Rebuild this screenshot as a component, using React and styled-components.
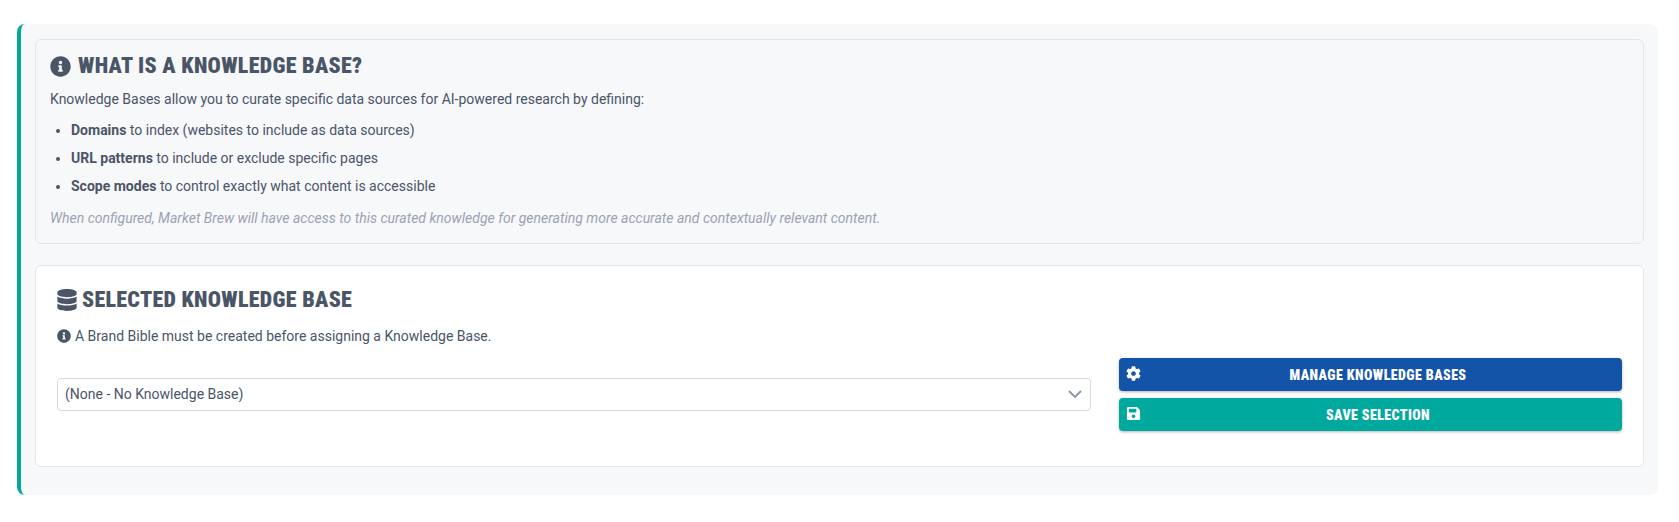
import React from 'react';
import styled, { createGlobalStyle } from 'styled-components';
import { FaCog, FaDatabase, FaInfoCircle, FaSave } from 'react-icons/fa';

const GlobalStyle = createGlobalStyle`
  html, body {
    margin: 0;
    padding: 0;
    background: #fff;
    font-family: Roboto, "Liberation Sans", sans-serif;
    color: #4a5568;
  }
`;

const App = () => {
  return (
    <>
      <GlobalStyle />
      <Page>
        <Panel>
          <InfoCard>
            <InfoTitle>
              <FaInfoCircle size={21} />
              What is a Knowledge Base?
            </InfoTitle>
            <Intro>Knowledge Bases allow you to curate specific data sources for AI-powered research by defining:</Intro>
            <List>
              <li><b>Domains</b> to index (websites to include as data sources)</li>
              <li><b>URL patterns</b> to include or exclude specific pages</li>
              <li><b>Scope modes</b> to control exactly what content is accessible</li>
            </List>
            <Note>When configured, Market Brew will have access to this curated knowledge for generating more accurate and contextually relevant content.</Note>
          </InfoCard>
          <SelectCard>
            <SelectTitle>
              <FaDatabase size={22} />
              Selected Knowledge Base
            </SelectTitle>
            <Warning>
              <FaInfoCircle size={14} />
              A Brand Bible must be created before assigning a Knowledge Base.
            </Warning>
            <Row>
              <SelectWrap>
                <Select defaultValue="none">
                  <option value="none">(None - No Knowledge Base)</option>
                </Select>
                <Chevron width="14" height="8" viewBox="0 0 14 8">
                  <path d="M1 1l6 6 6-6" fill="none" stroke="#8a94a6" strokeWidth="1.8" />
                </Chevron>
              </SelectWrap>
              <Buttons>
                <Btn $bg="#1353a8"><FaCog size={15} /><span>Manage Knowledge Bases</span></Btn>
                <Btn $bg="#00a99d"><FaSave size={15} /><span>Save Selection</span></Btn>
              </Buttons>
            </Row>
          </SelectCard>
        </Panel>
      </Page>
    </>
  );
};

const Page = styled.div`
  padding: 24px 21px 27px 17px;
`;

const Panel = styled.div`
  display: flex;
  flex-direction: column;
  gap: 21px;
  background: #f7f8fa;
  border-left: 4px solid #00a99d;
  border-radius: 8px;
  padding: 15px 14px 28px 14px;
`;

const InfoCard = styled.section`
  height: 205px;
  box-sizing: border-box;
  padding: 14px 14px 0;
  border: 1px solid #e2e6ee;
  border-radius: 6px;
  background: #f7f8fa;
`;

const Heading = `
  display: flex;
  align-items: center;
  margin: 0;
  font-family: Roboto, sans-serif;
  font-weight: 900;
  font-stretch: 75%;
  letter-spacing: 0.3px;
  text-transform: uppercase;
  color: #4a5568;
`;

const InfoTitle = styled.h3`
  ${Heading}
  gap: 7px;
  font-size: 22px;
  line-height: 24px;
`;

const Intro = styled.p`
  margin: 11px 0 0;
  font-size: 14px;
  line-height: 20px;
`;

const List = styled.ul`
  margin: 11px 0 0;
  padding-left: 21px;
  font-size: 14px;
  line-height: 20px;

  li + li {
    margin-top: 8px;
  }

  b {
    font-weight: 700;
  }
`;

const Note = styled.p`
  margin: 12px 0 0;
  font-size: 14px;
  line-height: 20px;
  font-style: italic;
  color: #9aa3b2;
`;

const SelectCard = styled.section`
  height: 202px;
  box-sizing: border-box;
  padding: 21px 21px 0;
  border: 1px solid #e2e6ee;
  border-radius: 6px;
  background: #fff;
`;

const SelectTitle = styled.h3`
  ${Heading}
  gap: 4px;
  font-size: 22px;
  line-height: 26px;

  svg {
    margin-left: -1px;
  }
`;

const Warning = styled.div`
  display: flex;
  align-items: center;
  gap: 4px;
  margin-top: 13px;
  font-size: 14px;
  line-height: 20px;
`;

const Row = styled.div`
  display: grid;
  grid-template-columns: 1034px 503px;
  column-gap: 28px;
  align-items: center;
  margin-top: 12px;
`;

const SelectWrap = styled.div`
  position: relative;
`;

const Select = styled.select`
  display: block;
  width: 100%;
  height: 33px;
  padding: 0 7px 2px;
  appearance: none;
  border: 1px solid #d5d9e6;
  border-radius: 4px;
  background: #fff;
  font-family: Roboto, sans-serif;
  font-size: 14px;
  color: #4a5568;
`;

const Chevron = styled.svg`
  position: absolute;
  right: 9px;
  top: 12px;
`;

const Buttons = styled.div`
  display: flex;
  flex-direction: column;
  gap: 7px;
`;

const Btn = styled.button`
  display: grid;
  grid-template-columns: 15px 1fr;
  align-items: center;
  height: 33px;
  padding: 0 7px;
  border: 0;
  border-radius: 4px;
  background: ${(p) => p.$bg};
  box-shadow: 0 1px 3px rgba(0, 0, 0, 0.3);
  color: #fff;
  font-family: Roboto, sans-serif;
  font-size: 14px;
  font-weight: 900;
  font-stretch: 75%;
  letter-spacing: 0.4px;
  text-transform: uppercase;

  svg {
    margin-top: -3px;
  }
`;

export default App;
